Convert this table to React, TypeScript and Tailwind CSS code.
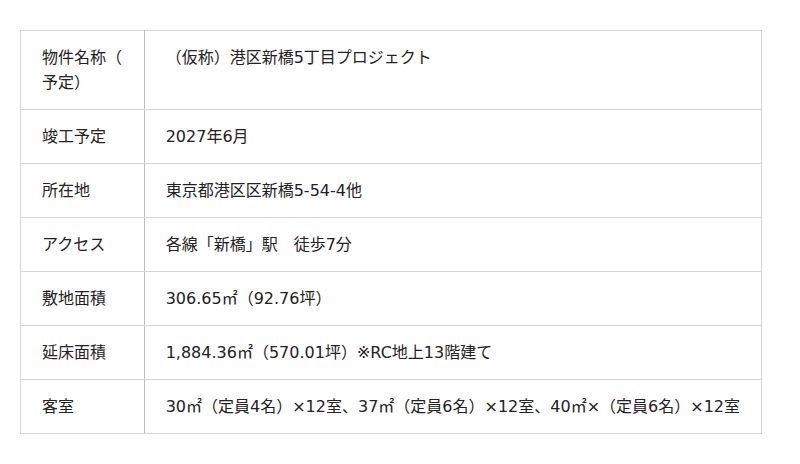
import React from 'react';

const rows: [React.ReactNode, string][] = [
  [<>物件名称（<br />予定）</>, '（仮称）港区新橋5丁目プロジェクト'],
  ['竣工予定', '2027年6月'],
  ['所在地', '東京都港区区新橋5-54-4他'],
  ['アクセス', '各線「新橋」駅　徒歩7分'],
  ['敷地面積', '306.65㎡（92.76坪）'],
  ['延床面積', '1,884.36㎡（570.01坪）※RC地上13階建て'],
  ['客室', '30㎡（定員4名）×12室、37㎡（定員6名）×12室、40㎡×（定員6名）×12室'],
];

export default function App() {
  return (
    <div className="w-[800px] h-[464px] bg-white pt-[30px] pl-5">
      <table
        className="w-[742px] border-collapse text-[16px] leading-[25px] text-[#222]"
        style={{ fontFamily: '"DejaVu Sans", "Noto Sans CJK JP", sans-serif' }}
      >
        <tbody>
          {rows.map(([label, value], i) => (
            <tr key={i}>
              <th className="w-[124px] whitespace-nowrap border border-[#d6d6d6] border-r-[#bdbdbd] px-[21px] py-[14px] text-left align-top font-normal">
                {label}
              </th>
              <td className="whitespace-nowrap border border-[#d6d6d6] px-[21px] py-[14px] align-top">
                {value}
              </td>
            </tr>
          ))}
        </tbody>
      </table>
    </div>
  );
}
